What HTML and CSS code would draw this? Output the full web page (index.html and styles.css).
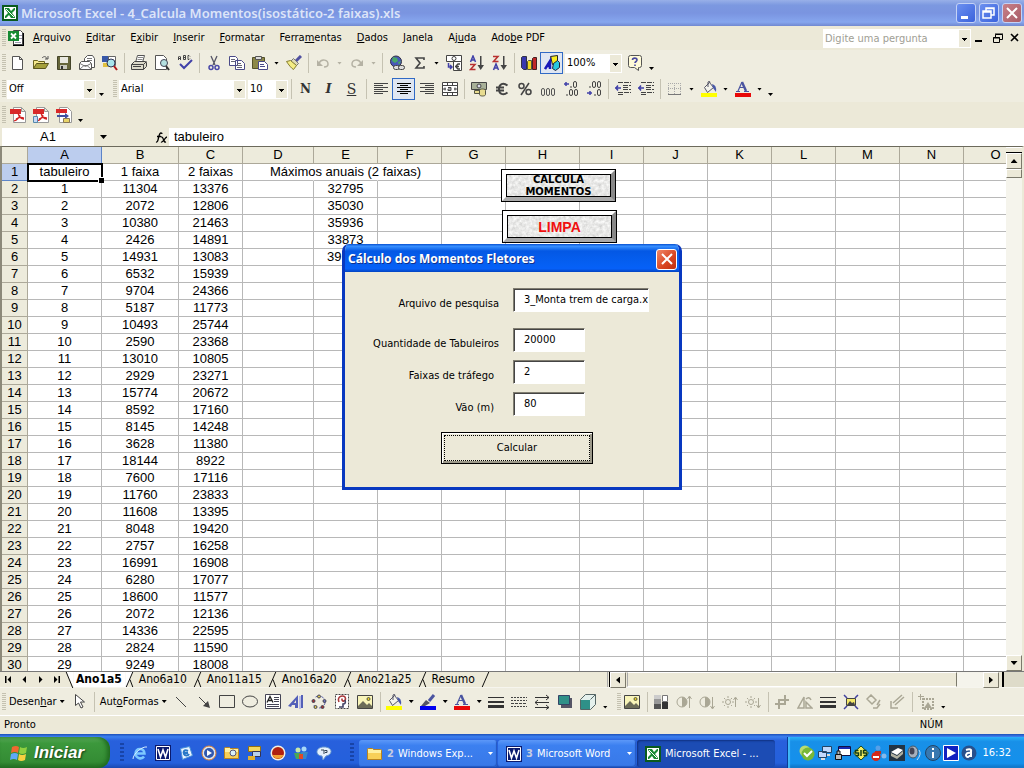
FILE: index.html
```html
<!DOCTYPE html>
<html lang="pt-BR">
<head>
<meta charset="utf-8">
<title>Microsoft Excel - 4_Calcula Momentos(isostático-2 faixas).xls</title>
<link rel="stylesheet" href="styles.css">
</head>
<body>
<svg class="sprite" aria-hidden="true">
<defs>
<symbol id="xl" viewBox="0 0 16 16"><path fill="#0a5a1e" d="M0 0h16v16H0z"/><path fill="#fff" d="M2 2h12v12H2z"/><path fill="#178a32" d="M3 3h4l2 3 3-3h1v2L10 8l3 4v1H9l-2-3-3 3H3v-2l3-3-3-4z"/><path stroke="#fff" d="M4 4l8 8" fill="none"/></symbol>
<symbol id="wd" viewBox="0 0 16 16"><path fill="#0a1a6e" d="M0 0h16v16H0z"/><path fill="none" stroke="#fff" d="M1.500 1.500h13v13h-13z"/><path fill="none" stroke="#fff" stroke-width="1.600" d="M3 4l2.500 8L8 5l2.500 7L13 4"/></symbol>
<symbol id="doc" viewBox="0 0 16 16"><path fill="#000" d="M7 3h9v13H5v-3z"/><path fill="#fff" stroke="#444" d="M5.500.5h7l2 2v12h-9z"/><path stroke="#99a" d="M11 5.500h3M11 8.500h3M7 12.500h6"/><path fill="#178a32" d="M0 1h11v10H0z"/><path stroke="#fff" stroke-width="1.800" d="M3 3.500l5 5M8 3.500l-5 5"/></symbol>
<symbol id="new" viewBox="0 0 16 16"><path fill="#fff" stroke="#555" d="M2.500 1.500h7l3 3v10h-10zM9.500 1.500v3h3"/></symbol>
<symbol id="open" viewBox="0 0 16 16"><path fill="#f5e88c" stroke="#6b6420" d="M.5 13.500v-8h4l1 1h6v3"/><path fill="#a5a03c" stroke="#5a551c" d="M.5 13.500l3-5h12l-3 5z"/><path fill="none" stroke="#555" d="M9 3c2-2 4-2 5 1M15 1v3h-3"/></symbol>
<symbol id="save" viewBox="0 0 16 16"><path fill="#66663a" stroke="#44442a" d="M1.500 1.500h13v13h-13z"/><path fill="#e8e8e0" d="M4 2h8v6H4z"/><path fill="#c9c9bd" d="M4 10h7v4H4z"/><path fill="#333" d="M5 11h2v3H5z"/></symbol>
<symbol id="mail" viewBox="0 0 16 16"><path fill="#fff" stroke="#555" d="M5.500 7V3.500l3-3h5l2 3v9h-4"/><path stroke="#777" d="M8 3.500h5M8 5.500h5"/><path fill="#fff" stroke="#555" d="M.5 8.500l2-2h8l2 2v6H.5z"/><path fill="none" stroke="#777" d="M1 14l4-3.500h3l4 3.500M1 8.500l5.500 3 5.500-3"/></symbol>
<symbol id="find" viewBox="0 0 16 16"><path fill="#3858a8" d="M0 1h7v6H0z"/><path fill="#e0c040" d="M1 8h5v4H1z"/><path fill="#fff" stroke="#666" d="M6.500 1.500h7v9h-7z"/><circle cx="9" cy="8" r="4" fill="#a8e4ec" stroke="#335"/><path stroke="#b01818" stroke-width="2" d="M12 11l3 4"/></symbol>
<symbol id="print" viewBox="0 0 16 16"><path fill="#fff" stroke="#555" d="M6.500.5h7l-2 7h-7z"/><path stroke="#888" d="M7 2.500h5M6.500 4.500h5"/><path fill="#dcdaca" stroke="#444" d="M.5 9.500l3-3h11l1 1v4l-3 3h-12z"/><path fill="none" stroke="#444" d="M.5 9.500h12l3-3M12.500 9.500v5M2 11.500h8"/></symbol>
<symbol id="prev" viewBox="0 0 16 16"><path fill="#fff" stroke="#555" d="M1.500.5h8l3 3v11h-11z"/><circle cx="10" cy="8" r="3.500" fill="#b4e0e0" stroke="#445"/><path stroke="#333" stroke-width="2" d="M12 11l3 4"/></symbol>
<symbol id="abc" viewBox="0 0 16 16"><path fill="none" stroke="#444" d="M1.500 5V2l1-1 1 1v3M1.500 3.500h2M6.500.5h2v4h-2zM6.500 2.500h2M13 1.500l-1-1h-1v4h1l1-1"/><path fill="none" stroke="#4040a8" stroke-width="2" d="M3 9l4 4 8-8"/></symbol>
<symbol id="cut" viewBox="0 0 16 16"><path stroke="#556" stroke-width="1.300" d="M5 1l4 9M11 1L7 10"/><g fill="none" stroke="#4848a8" stroke-width="1.500"><circle cx="5" cy="12.500" r="2"/><circle cx="11" cy="12.500" r="2"/></g></symbol>
<symbol id="copy" viewBox="0 0 16 16"><path fill="#fff" stroke="#4a4a88" d="M.5 1.500h6l2 2v7h-8zM6.500 5.500h6l3 3v6h-9z"/><path stroke="#667" d="M2 4.500h4M2 6.500h4M8 8.500h4M8 10.500h5M8 12.500h5"/></symbol>
<symbol id="paste" viewBox="0 0 16 16"><path fill="#8c8848" stroke="#54522c" d="M.5 2.500h12v11H.5z"/><path fill="#ddd" stroke="#555" d="M3.500 1.500h6v3h-6z"/><path fill="#fff" stroke="#4a4a88" d="M6.500 6.500h6l3 3v5h-9z"/><path stroke="#4a4a88" d="M8 9.500h4M8 11.500h5"/></symbol>
<symbol id="brush" viewBox="0 0 16 16"><path stroke="#5050a0" stroke-width="3" d="M15 1l-5 5"/><path fill="#dedab8" stroke="#777" d="M7.500 3.500l5 5-2 2-6-4z"/><path fill="#f4ec84" stroke="#857d30" d="M.5 6.500l4-1 6 5-3 4c-2-1-5-5-7-8z"/></symbol>
<symbol id="undo" viewBox="0 0 16 16"><path fill="none" stroke="#b5b2a4" stroke-width="1.500" d="M4 8c3-5 9-3 9 1 0 2-1 3-4 3"/><path fill="#b5b2a4" d="M2 5v6h6z"/></symbol>
<symbol id="redo" viewBox="0 0 16 16"><path fill="none" stroke="#b5b2a4" stroke-width="1.500" d="M12 8C9 3 3 5 3 9c0 2 1 3 4 3"/><path fill="#b5b2a4" d="M14 5v6H8z"/></symbol>
<symbol id="link" viewBox="0 0 16 16"><circle cx="7" cy="6.500" r="5.500" fill="#4858b8" stroke="#334"/><path fill="#48a868" d="M4 2l4 1 1 3-3 2-3-2zM9 7l3-1-2 4z"/><g fill="#ddd" stroke="#444"><rect x="4.500" y="10.500" width="6" height="4" rx="2"/><rect x="9.500" y="10.500" width="6" height="4" rx="2"/></g></symbol>
<symbol id="sum" viewBox="0 0 16 16"><path fill="none" stroke="#444" stroke-width="1.600" d="M12 5V3H4l4 5-4 5h8v-2"/></symbol>
<symbol id="conv" viewBox="0 0 16 16"><path fill="#fff" stroke="#444" d="M.5.5h15v6H.5zM7.500 6.500h8v9h-8z"/><circle cx="8" cy="3.500" r="2" fill="none" stroke="#444"/><path fill="none" stroke="#444" stroke-width="1.500" d="M14 9h-2l-1.500 1.500v2L12 14h2M9 11.500h4"/><path fill="none" stroke="#4040a8" stroke-width="1.500" d="M2.500 8v4H6M4 10l2 2-2 2"/></symbol>
<symbol id="az" viewBox="0 0 16 16"><path fill="none" stroke="#4040a8" stroke-width="1.500" d="M1.500 7l2.500-6 2.500 6M2.500 5h3"/><path fill="none" stroke="#b83030" stroke-width="1.500" d="M1 9.500h5L1.500 14.500h5"/><path fill="#444" d="M11 1h1.500v9H15l-3.300 5L8.500 10H11z"/></symbol>
<symbol id="za" viewBox="0 0 16 16"><path fill="none" stroke="#4040a8" stroke-width="1.500" d="M1.500 15L4 9l2.500 6M2.500 13h3"/><path fill="none" stroke="#b83030" stroke-width="1.500" d="M1 1.500h5L1.500 6.500h5"/><path fill="#444" d="M11 1h1.500v9H15l-3.300 5L8.500 10H11z"/></symbol>
<symbol id="chart" viewBox="0 0 16 16"><path fill="#3838b0" stroke="#334" d="M.5 2.500l1-1h4v13h-3l-2-2z"/><path fill="#f0d820" stroke="#554" d="M6.500 6.500l1-1h3v9h-4z"/><path fill="#c02828" stroke="#422" d="M11.500 3.500l1-1h3v12h-4z"/></symbol>
<symbol id="draw" viewBox="0 0 16 16"><path fill="#f8ec20" stroke="#222" d="M6.500 1.500l7-1v7l-5 2z"/><path fill="#28c8e0" stroke="#223" d="M9.500 8.500l4-3 2 2v5l-4 3-3-2z"/><path fill="none" stroke="#1818b8" stroke-width="2.500" d="M1 14L6 6v8M3 11h3"/></symbol>
<symbol id="help" viewBox="0 0 16 16"><path fill="#fffbd8" stroke="#555" d="M3.500.5h9q2 0 2 2v8q0 2-2 2h-1v3l-4-3h-4q-2 0-2-2v-8q0-2 2-2z"/><path fill="none" stroke="#4848a0" stroke-width="1.600" d="M5.500 5C5.500 2.500 10 2.500 10 5 10 6.500 8 6.500 8 8M8 9.500v1.500"/></symbol>
<symbol id="al" viewBox="0 0 16 16"><path stroke="#444" d="M1 2.500h14M1 4.500h9M1 6.500h14M1 8.500h9M1 10.500h14M1 12.500h9"/></symbol>
<symbol id="ac" viewBox="0 0 16 16"><path stroke="#000" d="M1 2.500h14M4 4.500h8M1 6.500h14M4 8.500h8M1 10.500h14M4 12.500h8"/></symbol>
<symbol id="ar" viewBox="0 0 16 16"><path stroke="#444" d="M1 2.500h14M6 4.500h9M1 6.500h14M6 8.500h9M1 10.500h14M6 12.500h9"/></symbol>
<symbol id="merge" viewBox="0 0 16 16"><path fill="#fff" stroke="#444" d="M.5 1.500h15v13H.5zM.5 4.500h15M.5 11.500h15M5.500 1.500v3M10.500 1.500v3M5.500 11.500v3M10.500 11.500v3"/><path fill="none" stroke="#444" d="M1 8h3M12 8h3M3 6.500v3M13 6.500v3M6 6.500h3v3H6v-1.500h3"/></symbol>
<symbol id="money" viewBox="0 0 16 16"><path fill="#a8b098" stroke="#444" d="M.5 1.500h15v7H.5z"/><circle cx="8" cy="5" r="2" fill="#dde" stroke="#444"/><path fill="#e8dc90" stroke="#554" d="M8.500 9.500c0-2 6-2 6 0v4c0 2-6 2-6 0zM3.500 9.500h5v3h-5z"/></symbol>
<symbol id="euro" viewBox="0 0 16 16"><path fill="none" stroke="#444" stroke-width="2" d="M13.500 4.500C9 1 5 3 5 8s4 7 8.500 3.500M2 6.500h8M2 9.500h8"/></symbol>
<symbol id="pct" viewBox="0 0 16 16"><g fill="none" stroke="#444" stroke-width="1.500"><circle cx="4.500" cy="5" r="2.500"/><circle cx="11.500" cy="11" r="2.500"/><path d="M12 2L4 14"/></g></symbol>
<symbol id="mil" viewBox="0 0 16 16"><g fill="none" stroke="#555"><rect x="1.500" y="7.500" width="3" height="7" rx="1.500"/><rect x="6.500" y="7.500" width="3" height="7" rx="1.500"/><rect x="11.500" y="7.500" width="3" height="7" rx="1.500"/></g></symbol>
<symbol id="inc" viewBox="0 0 16 16"><path stroke="#4040a8" stroke-width="1.500" d="M1 3h5M3 1v4"/><g fill="none" stroke="#444"><rect x="10.500" y=".5" width="3" height="6" rx="1.500"/><rect x="6.500" y="8.500" width="3" height="6" rx="1.500"/><rect x="11.500" y="8.500" width="3" height="6" rx="1.500"/><path d="M8 5v2M4 13v2"/></g></symbol>
<symbol id="dec" viewBox="0 0 16 16"><path stroke="#4040a8" stroke-width="1.500" d="M1 12h5M4 10v4"/><g fill="none" stroke="#444"><rect x="6.500" y=".5" width="3" height="6" rx="1.500"/><rect x="11.500" y=".5" width="3" height="6" rx="1.500"/><rect x="11.500" y="8.500" width="3" height="6" rx="1.500"/><path d="M4 5v2M9 13v2"/></g></symbol>
<symbol id="ind" viewBox="0 0 16 16"><path stroke="#444" d="M3 1.500h13M8 4.500h8M8 6.500h5M8 8.500h8M3 11.500h13M3 13.500h6" stroke-dasharray="5 1"/><path fill="none" stroke="#4040a8" stroke-width="1.500" d="M0 7h6M3 4.500L1 7l2 2.500"/></symbol>
<symbol id="bord" viewBox="0 0 16 16"><path fill="none" stroke="#aaa" stroke-dasharray="1 1" d="M1.500 2v12M7.500 2v12M13.500 2v12M1 2.500h13M1 7.500h13"/><path stroke="#777" d="M1 13.500h13"/></symbol>
<symbol id="bkt" viewBox="0 0 16 12"><path fill="#f4f4ec" stroke="#556" d="M3.500 6.500l5-5 4 5-6 5z"/><path fill="none" stroke="#556" d="M7 6V1q2-2 2 1"/><path fill="#4858a8" d="M11 3q5 1 4 8l-3-4z"/></symbol>
<symbol id="fill" viewBox="0 0 16 16"><use href="#bkt" height="12"/><path fill="#ff0" d="M0 12h16v4H0z"/></symbol>
<symbol id="fcol" viewBox="0 0 16 16"><path fill="none" stroke="#4a54a0" stroke-width="1.200" d="M3 10L7 1"/><path fill="none" stroke="#4a54a0" stroke-width="2.400" d="M7 1l4 9"/><path stroke="#4a54a0" d="M5 6.500h5M1 10.500h4M9 10.500h5"/><path fill="#e80808" d="M0 12h16v4H0z"/></symbol>
<symbol id="lcol" viewBox="0 0 16 16"><path stroke="#4a54a0" stroke-width="3" d="M14 1L9 7"/><path fill="#556" d="M6 6l4 3-5 3H1z"/><path fill="#0000f0" d="M0 12h16v4H0z"/></symbol>
<symbol id="pdf" viewBox="0 0 16 16"><path fill="#fff" stroke="#999" d="M3.500.5h8l4 4v11h-12zM11.500.5v4h4"/><path fill="#d82828" d="M0 2h11v5H0z"/><path fill="none" stroke="#d02020" stroke-width="1.300" d="M8 6c1 4 3 6 6 6M10 8c-1 3-3 5-6 6M6 12c3-2 5-2 8-1"/></symbol>
<symbol id="pdf2" viewBox="0 0 16 16"><use href="#pdf"/><path fill="#c8d8f8" stroke="#58a" d="M.5 9.500h4v6h-4z"/></symbol>
<symbol id="pdf3" viewBox="0 0 16 16"><path fill="#fff" stroke="#999" d="M3.500.5h8l4 4v11h-12z"/><path fill="#d82828" d="M0 2h11v4H0z"/><path fill="#4050a0" d="M1 8h8V6l4 3-4 3v-2H1z"/><path fill="#e8d468" stroke="#875" d="M7.500 11.500h6v4h-6z"/></symbol>
<symbol id="cur" viewBox="0 0 16 16"><path fill="#fff" stroke="#444" d="M4.500.5v11l3-2.500 2.500 5 2-1-2.500-5h4z"/></symbol>
<symbol id="line" viewBox="0 0 16 16"><path stroke="#444" d="M3 3l10 10"/></symbol>
<symbol id="arw" viewBox="0 0 16 16"><path stroke="#444" d="M3 3l9 9"/><path fill="#444" d="M14 14l-7-2 5-5z"/></symbol>
<symbol id="rect" viewBox="0 0 16 16"><path fill="none" stroke="#444" d="M.5 1.500h15v12H.5z"/></symbol>
<symbol id="oval" viewBox="0 0 16 16"><ellipse cx="8" cy="7.500" rx="7.500" ry="5.500" fill="none" stroke="#444"/></symbol>
<symbol id="tbox" viewBox="0 0 16 16"><path fill="#fff" stroke="#445" d="M.5.5h15v14H.5z"/><path stroke="#445" d="M9 3.500h5M9 5.500h5M9 7.500h5M2 10.500h12M2 12.500h12"/><path fill="none" stroke="#222" stroke-width="1.300" d="M2 8.500l3-6 3 6M3.500 6.500h3"/></symbol>
<symbol id="wart" viewBox="0 0 16 16"><path fill="#5460b8" d="M0 12L10 1v13H7v-3H4l-1 2z"/><path fill="#b8bce8" d="M11 2h2v13h-2z"/><path fill="#5460b8" d="M13 1h2v13h-2z"/><path fill="#ece9d8" d="M6 9l2-3v3z"/></symbol>
<symbol id="diag" viewBox="0 0 16 16"><circle cx="8" cy="8" r="6" fill="none" stroke="#5058a8" stroke-dasharray="3 3"/><g stroke="#445"><circle cx="8" cy="2.500" r="1.500" fill="#dcc850"/><circle cx="2.500" cy="7" r="1.500" fill="#a43030"/><circle cx="13.500" cy="7" r="1.500" fill="#6870b8"/><circle cx="4.500" cy="13" r="1.500" fill="#dcc850"/><circle cx="11.500" cy="13" r="1.500" fill="#a43030"/></g></symbol>
<symbol id="clip" viewBox="0 0 16 16"><path fill="#fff" stroke="#444" d="M1.500.5h13v14h-13z" stroke-dasharray="2 1"/><path fill="none" stroke="#a83838" stroke-width="1.600" d="M5 8C2 2 11 0 11.500 4.500c0 3-4 4-3.500 0"/><path fill="none" stroke="#446" stroke-width="1.600" d="M11 6c1 3 0 4-2 4v3H5"/></symbol>
<symbol id="pic" viewBox="0 0 16 16"><path fill="#f8f4b8" stroke="#444" d="M.5 1.500h15v13H.5z"/><path fill="#6c6c58" d="M1 14v-2l5-5 4 4 2-2 3 3v2z"/><circle cx="11.500" cy="5" r="1.500" fill="#e8d020" stroke="#554"/></symbol>
<symbol id="lw" viewBox="0 0 16 16"><path fill="#333" d="M0 3h16v1H0zM0 7h16v2H0zM0 11h16v3H0z"/></symbol>
<symbol id="dash" viewBox="0 0 16 16"><path stroke="#444" stroke-dasharray="2 1" d="M0 3.500h16M0 6.500h16M0 12.500h16"/><path stroke="#444" stroke-dasharray="3 1" d="M0 9.500h16"/></symbol>
<symbol id="arws" viewBox="0 0 16 16"><path fill="none" stroke="#333" d="M1 3.500h14M12 1l3 2.500L12 6M1 8.500h14M4 6L1 8.500 4 11M1 13.500h14M12 11l3 2.500-3 2"/></symbol>
<symbol id="shad" viewBox="0 0 16 16"><path fill="#556" d="M4 4h11v10H4z"/><path fill="#2f9088" stroke="#346" d="M1.500 1.500h11v9h-11z"/></symbol>
<symbol id="cube" viewBox="0 0 16 16"><path fill="#e4f0ec" stroke="#566" d="M.5 5.500l5-5h10v10l-5 5H.5z"/><path fill="#2f9088" d="M1 6h9v9H1z"/><path stroke="#566" d="M10.500 5.500l5-5"/></symbol>
<symbol id="grad" viewBox="0 0 16 16"><path fill="#ccc" d="M1 1h7v4H1z"/><path fill="#999" d="M1 5h7v5H1z"/><path fill="#555" d="M1 10h7v5H1z"/><path fill="#fff" stroke="#777" d="M9.500 1.500h5v6h-5z"/><path fill="#333" d="M9 8h6v7H9z"/></symbol>
<symbol id="con" viewBox="0 0 16 16"><circle cx="6" cy="8" r="5" fill="none" stroke="#aaa795"/><path fill="#aaa795" d="M6 3a5 5 0 010 10z"/><path fill="none" stroke="#aaa795" d="M13.500 14V3M11.500 5l2-3 2 3"/></symbol>
<symbol id="cod" viewBox="0 0 16 16"><circle cx="6" cy="8" r="5" fill="none" stroke="#aaa795"/><path fill="#aaa795" d="M6 3a5 5 0 010 10z"/><path fill="none" stroke="#aaa795" d="M13.500 3v11M11.500 12l2 3 2-3"/></symbol>
<symbol id="sun" viewBox="0 0 16 16"><circle cx="6" cy="8" r="2.500" fill="none" stroke="#aaa795"/><path stroke="#aaa795" stroke-dasharray="2 8" d="M6 2v12M0 8h12M2 4l8 8M10 4l-8 8"/><path fill="none" stroke="#aaa795" d="M13.500 13V4M11.500 6l2-3 2 3"/></symbol>
<symbol id="sud" viewBox="0 0 16 16"><circle cx="6" cy="8" r="2.500" fill="none" stroke="#aaa795"/><path stroke="#aaa795" stroke-dasharray="2 8" d="M6 2v12M0 8h12M2 4l8 8M10 4l-8 8"/><path fill="none" stroke="#aaa795" d="M13.500 4v9M11.500 11l2 3 2-3"/></symbol>
<symbol id="crop" viewBox="0 0 16 16"><path fill="none" stroke="#aaa795" stroke-width="2" d="M5 15V6h10M1 10h10V1"/></symbol>
<symbol id="rot" viewBox="0 0 16 16"><path fill="none" stroke="#aaa795" stroke-width="1.500" d="M7 3v11H1zM9 14V8l6 6zM9 5q3-3 5 1"/></symbol>
<symbol id="comp" viewBox="0 0 16 16"><path fill="#f4e868" stroke="#444" d="M3.500 4.500h9v7h-9z"/><path stroke="#4040a0" stroke-width="1.500" d="M1 1l3 3M15 1l-3 3M1 15l3-3M15 15l-3-3"/><path fill="#444" d="M4 11l3-4 2 2 2-1 1 3z"/></symbol>
<symbol id="gbk" viewBox="0 0 16 16"><path fill="none" stroke="#aaa795" stroke-width="1.500" d="M1 5l4-4 5 5-4 4zM14 6l-3 5M14 10l-3 4H7"/></symbol>
<symbol id="gar" viewBox="0 0 16 16"><path fill="none" stroke="#aaa795" stroke-width="1.500" d="M15 3L6 11M13 1L4 9M2 7v7h7"/></symbol>
<symbol id="gst" viewBox="0 0 16 16"><path fill="none" stroke="#aaa795" stroke-dasharray="2 1" stroke-width="2" d="M5 5h10v10H5z"/><path fill="#aaa795" d="M6 14l4-6 4 6zM0 2h6v1H0zM2 0h1v6H2z"/></symbol>
<symbol id="ie" viewBox="0 0 16 16"><path fill="none" stroke="#7cc8ff" stroke-width="2.500" d="M3 8.500h9.500C12 2.500 4 2.500 3.500 8.500 4 14 10 14.500 12 11.500"/><path fill="none" stroke="#d4ecff" d="M1 14C1 9 10 1 15 2"/></symbol>
<symbol id="oe" viewBox="0 0 16 16"><path fill="#e8f4ff" stroke="#4890d8" d="M2.500 3.500l9-2 3 9-10 4z"/><path fill="none" stroke="#2878c8" stroke-width="2" d="M10 6C6 4 5 7 6 9s4 2 5 0M6 8h4"/></symbol>
<symbol id="wmp" viewBox="0 0 16 16"><circle cx="8" cy="8" r="7" fill="#dce8f4" stroke="#e08030"/><circle cx="8" cy="8" r="5" fill="#3058b0"/><path fill="#fff" d="M6 5l5 3-5 3z"/></symbol>
<symbol id="fold" viewBox="0 0 16 16"><path fill="#fff0a0" stroke="#b88420" d="M.5 3.500q0-1 1-1h4l1 1h7q1 0 1 1v9h-14z"/><path fill="#f8d058" d="M1 7h13v6H1z"/></symbol>
<symbol id="fsr" viewBox="0 0 16 16"><use href="#fold"/><circle cx="9" cy="8" r="3" fill="#d8f0f8" stroke="#557"/></symbol>
<symbol id="net" viewBox="0 0 16 16"><path fill="#f4d860" stroke="#967010" d="M1.500 1.500h12v5h-12z"/><path fill="#b8d0ec" stroke="#335" d="M5.500 6.500h8v5h-8z"/><path fill="#e0b030" d="M1 11h7v4H1z"/></symbol>
<symbol id="red" viewBox="0 0 16 16"><circle cx="8" cy="8" r="7.500" fill="#f4f0e0"/><circle cx="8" cy="8" r="6" fill="#b02010"/><path fill="#f4a030" d="M2.500 10h11a6 6 0 01-11 0z"/></symbol>
<symbol id="ppl" viewBox="0 0 16 16"><circle cx="5" cy="5" r="2.500" fill="#c8e8a8"/><circle cx="11" cy="4" r="2.500" fill="#a8d8f8"/><path fill="#48a858" d="M1 8h7l-1 6H3z"/><path fill="#3888c8" d="M8 7h7l-2 7H9z"/><path fill="#e04828" d="M6 9h4v5H6z"/></symbol>
<symbol id="chat" viewBox="0 0 16 16"><path fill="#e4f0fc" stroke="#6898d0" d="M8 2C-1 2-1 11 6 11l1 4 3-4c7-1 7-9-2-9z"/><path fill="none" stroke="#345" d="M5 5h3v4M8.500 5.500H11v2H9"/></symbol>
<symbol id="skype" viewBox="0 0 16 16"><circle cx="6" cy="6" r="5.500" fill="#b8dc70"/><circle cx="9" cy="9" r="6.500" fill="#78b838"/><path fill="none" stroke="#fff" stroke-width="2" d="M5 8l3 3 5-5"/></symbol>
<symbol id="mons" viewBox="0 0 16 16"><path fill="#c0d8fc" stroke="#246" d="M5.500 1.500h9v6h-9zM1.500 6.500h8v6h-8z"/><path fill="#ddd" d="M10 9h3v2h-3zM4 13h4v2H4z"/></symbol>
<symbol id="lock" viewBox="0 0 16 16"><path fill="#fff" stroke="#114" d="M3.500 1.500h12v9h-12z"/><path fill="#1828b0" d="M4 2h11v2H4z"/><path fill="#bbb" stroke="#111" d="M.5 9.500h6v5h-6zM2 9V6h3v3"/></symbol>
<symbol id="sis" viewBox="0 0 16 16"><path fill="#f8f060" stroke="#1a4a20" d="M8 1l7.500 7L8 15 .5 8z"/><path fill="none" stroke="#123c18" stroke-width="1.500" d="M5.500 5.500h-3v2.500h3v2.500h-3M8 5v6M13.500 5.500h-3v2.500h3v2.500h-3"/></symbol>
<symbol id="stop" viewBox="0 0 16 16"><circle cx="7" cy="3" r="2.500" fill="#58a0e8"/><path fill="#c03020" d="M4 6h6v3H4z"/><circle cx="5" cy="11.500" r="4.500" fill="#d82818"/><path fill="#fff" d="M2 11h6v2H2z"/><circle cx="13" cy="11" r="2.500" fill="#88b8e8"/></symbol>
<symbol id="scan" viewBox="0 0 16 16"><path fill="#234" d="M0 0h16v16H0z"/><path fill="#fff" d="M2 7l7-4 5 2-6 5z"/><path fill="#b0b0a0" d="M2 8l6 3 6-5v3l-6 5-6-3z"/></symbol>
<symbol id="spk" viewBox="0 0 16 16"><ellipse cx="6" cy="7" rx="5" ry="6" fill="#a8b0bc" stroke="#456"/><ellipse cx="5" cy="6" rx="2.500" ry="3.500" fill="#445"/><path fill="none" stroke="#c8dcf4" d="M12 5q3 4-2 10"/></symbol>
<symbol id="inf" viewBox="0 0 16 16"><circle cx="8" cy="8" r="7.500" fill="#3878b0" stroke="#246"/><path fill="none" stroke="#fff" stroke-width="2" d="M8 3v2M8 7v6"/></symbol>
<symbol id="play" viewBox="0 0 16 16"><path fill="#1020c0" stroke="#fff" d="M.5.5h15v15H.5z"/><path fill="#fff" d="M4 3l9 5-9 5z"/></symbol>
<symbol id="ava" viewBox="0 0 16 16"><circle cx="8" cy="8" r="7.500" fill="#28508c"/><path fill="none" stroke="#fff" stroke-width="2" d="M5 5q6-2 5 2v5M10 8c-6-1-6 4-3 4l3-2"/></symbol>
<symbol id="flag" viewBox="0 0 18 18"><path fill="#f06830" d="M2 3q4-2 7 0L8 9Q5 7 1 9z"/><path fill="#90d040" d="M10 3q3 2 7 0l-1 6q-4 2-7 0z"/><path fill="#60a8f8" d="M1 10q4-2 7 0l-1 6q-3-2-7 0z"/><path fill="#f8d040" d="M9 10q3 2 7 0l-1 6q-4 2-7 0z"/></symbol>
<symbol id="fx" viewBox="0 0 14 14"><path fill="none" stroke="#000" stroke-width="1.300" d="M2 12c3 1 2-9 5-9 1 0 1 0 1 1M3 6.500h4M7 7c3-1 2 6 5 5M13 7c-2 0-4 6-6 5"/></symbol>
</defs>
</svg>

<header class="titlebar">
  <svg><use href="#xl"/></svg>
  <h1>Microsoft Excel - 4_Calcula Momentos(isostático-2 faixas).xls</h1>
  <button class="cap" aria-label="Minimizar"><svg viewBox="0 0 16 16"><path fill="#fff" d="M3 11h7v3H3z"/></svg></button>
  <button class="cap" aria-label="Restaurar"><svg viewBox="0 0 16 16"><path fill="none" stroke="#fff" stroke-width="1.500" d="M5 6V3h8v7h-3M2 6h8v7H2zM5 3.500h8M2 7h8"/></svg></button>
  <button class="cap close" aria-label="Fechar"><svg viewBox="0 0 16 16"><path stroke="#fff" stroke-width="2" d="M3 3l10 10M13 3L3 13"/></svg></button>
</header>

<nav class="menubar">
  <i class="grip"></i>
  <svg class="docicon"><use href="#doc"/></svg>
  <button><u>A</u>rquivo</button><button><u>E</u>ditar</button><button>E<u>x</u>ibir</button><button><u>I</u>nserir</button><button><u>F</u>ormatar</button><button>Ferra<u>m</u>entas</button><button><u>D</u>ados</button><button><u>J</u>anela</button><button>Aj<u>u</u>da</button><button>Ado<u>b</u>e PDF</button>
  <span class="combo ask"><input aria-label="Pergunta" placeholder="Digite uma pergunta"></span>
  <button class="mdi" aria-label="Minimizar pasta"><svg viewBox="0 0 16 16"><path d="M2 10h7v2H2z"/></svg></button>
  <button class="mdi" aria-label="Restaurar pasta"><svg viewBox="0 0 16 16"><path fill="none" stroke="#000" d="M5.500 7V4.500h7v5H10M3.500 7.500h6v5h-6zM5 4h8M3 8h7"/></svg></button>
  <button class="mdi" aria-label="Fechar pasta"><svg viewBox="0 0 16 16"><path stroke="#000" stroke-width="1.600" d="M4 4l7 7M11 4l-7 7"/></svg></button>
</nav>

<div class="toolbar">
  <i class="grip"></i>
  <button class="tb" aria-label="Novo"><svg><use href="#new"/></svg></button><button class="tb" aria-label="Abrir"><svg><use href="#open"/></svg></button><button class="tb" aria-label="Salvar"><svg><use href="#save"/></svg></button><button class="tb" aria-label="Email"><svg><use href="#mail"/></svg></button><button class="tb" aria-label="Pesquisar"><svg><use href="#find"/></svg></button>
  <i class="sep"></i>
  <button class="tb" aria-label="Imprimir"><svg><use href="#print"/></svg></button><button class="tb" aria-label="Visualizar"><svg><use href="#prev"/></svg></button><button class="tb" aria-label="Ortografia"><svg><use href="#abc"/></svg></button>
  <i class="sep"></i>
  <button class="tb" aria-label="Recortar"><svg><use href="#cut"/></svg></button><button class="tb" aria-label="Copiar"><svg><use href="#copy"/></svg></button><button class="tb" aria-label="Colar"><svg><use href="#paste"/></svg></button><button class="dd" aria-label="Opções de colar"></button><button class="tb" aria-label="Pincel"><svg><use href="#brush"/></svg></button>
  <i class="sep"></i>
  <button class="tb" aria-label="Desfazer"><svg><use href="#undo"/></svg></button><button class="dd off" aria-label="Lista desfazer"></button><button class="tb" aria-label="Refazer"><svg><use href="#redo"/></svg></button><button class="dd off" aria-label="Lista refazer"></button>
  <i class="sep"></i>
  <button class="tb" aria-label="Hiperlink"><svg><use href="#link"/></svg></button><button class="tb" aria-label="AutoSoma"><svg><use href="#sum"/></svg></button><button class="dd" aria-label="Funções"></button><button class="tb" aria-label="Conversão"><svg><use href="#conv"/></svg></button><button class="tb" aria-label="Crescente"><svg><use href="#az"/></svg></button><button class="tb" aria-label="Decrescente"><svg><use href="#za"/></svg></button>
  <i class="sep"></i>
  <button class="tb" aria-label="Gráfico"><svg><use href="#chart"/></svg></button><button class="tb on" aria-label="Desenho"><svg><use href="#draw"/></svg></button>
  <span class="combo zoom"><select aria-label="Zoom"><option>100%</option></select></span>
  <button class="tb" aria-label="Ajuda"><svg><use href="#help"/></svg></button><button class="dd low" aria-label="Mais botões"></button>
</div>

<div class="toolbar">
  <i class="grip"></i>
  <span class="combo style"><select aria-label="Modo"><option>Off</option></select></span><button class="dd low" aria-label="Mais opções"></button>
  <i class="grip mid"></i>
  <span class="combo font"><select aria-label="Fonte"><option>Arial</option></select></span>
  <span class="combo size"><select aria-label="Tamanho"><option>10</option></select></span>
  <i class="sep"></i>
  <button class="tb txt"><b>N</b></button><button class="tb txt"><em>I</em></button><button class="tb txt"><u>S</u></button>
  <i class="sep"></i>
  <button class="tb" aria-label="Esquerda"><svg><use href="#al"/></svg></button><button class="tb on" aria-label="Centralizar"><svg><use href="#ac"/></svg></button><button class="tb" aria-label="Direita"><svg><use href="#ar"/></svg></button><button class="tb" aria-label="Mesclar"><svg><use href="#merge"/></svg></button>
  <i class="sep"></i>
  <button class="tb" aria-label="Moeda"><svg><use href="#money"/></svg></button><button class="tb" aria-label="Euro"><svg><use href="#euro"/></svg></button><button class="tb" aria-label="Porcentagem"><svg><use href="#pct"/></svg></button><button class="tb" aria-label="Milhares"><svg><use href="#mil"/></svg></button><button class="tb" aria-label="Aumentar casas"><svg><use href="#inc"/></svg></button><button class="tb" aria-label="Diminuir casas"><svg><use href="#dec"/></svg></button>
  <i class="sep"></i>
  <button class="tb" aria-label="Diminuir recuo"><svg><use href="#ind"/></svg></button><button class="tb" aria-label="Aumentar recuo"><svg><use href="#ind"/></svg></button>
  <i class="sep"></i>
  <button class="tb" aria-label="Bordas"><svg><use href="#bord"/></svg></button><button class="dd" aria-label="Lista bordas"></button><button class="tb" aria-label="Preenchimento"><svg><use href="#fill"/></svg></button><button class="dd" aria-label="Cores de preenchimento"></button><button class="tb" aria-label="Cor da fonte"><svg><use href="#fcol"/></svg></button><button class="dd" aria-label="Cores da fonte"></button><button class="dd low" aria-label="Mais formatação"></button>
</div>

<div class="toolbar short">
  <i class="grip"></i>
  <button class="tb" aria-label="Converter em PDF"><svg><use href="#pdf"/></svg></button><button class="tb" aria-label="PDF e email"><svg><use href="#pdf2"/></svg></button><button class="tb" aria-label="PDF e revisão"><svg><use href="#pdf3"/></svg></button><button class="dd low" aria-label="Mais PDF"></button>
</div>

<div class="formula">
  <input class="name" aria-label="Caixa de nome" value="A1"><button class="dd" aria-label="Nomes"></button>
  <svg class="fx"><use href="#fx"/></svg>
  <input class="fbar" aria-label="Barra de fórmulas" value="tabuleiro">
</div>

<main class="work">
  <div class="sheet">
  <table class="grid">
  <colgroup><col class="h"><col class="a"><col class="b"><col><col class="d"><col><col><col><col class="a"><col><col><col><col><col><col><col></colgroup>
  <thead><tr><th><th class="sel">A<th>B<th>C<th>D<th>E<th>F<th>G<th>H<th>I<th>J<th>K<th>L<th>M<th>N<th>O</thead>
  <tbody>
  <tr><th class="sel">1<td class="active">tabuleiro<td>1 faixa<td>2 faixas<td class="open"><td class="open"><span class="spill">Máximos anuais (2 faixas)</span><td><td><td><td><td><td><td><td><td><td>
  <tr><th>2<td>1<td>11304<td>13376<td><td>32795<td><td><td><td><td><td><td><td><td><td>
  <tr><th>3<td>2<td>2072<td>12806<td><td>35030<td><td><td><td><td><td><td><td><td><td>
  <tr><th>4<td>3<td>10380<td>21463<td><td>35936<td><td><td><td><td><td><td><td><td><td>
  <tr><th>5<td>4<td>2426<td>14891<td><td>33873<td><td><td><td><td><td><td><td><td><td>
  <tr><th>6<td>5<td>14931<td>13083<td><td class="part">39<td><td><td><td><td><td><td><td><td><td>
  <tr><th>7<td>6<td>6532<td>15939<td><td><td><td><td><td><td><td><td><td><td><td>
  <tr><th>8<td>7<td>9704<td>24366<td><td><td><td><td><td><td><td><td><td><td><td>
  <tr><th>9<td>8<td>5187<td>11773<td><td><td><td><td><td><td><td><td><td><td><td>
  <tr><th>10<td>9<td>10493<td>25744<td><td><td><td><td><td><td><td><td><td><td><td>
  <tr><th>11<td>10<td>2590<td>23368<td><td><td><td><td><td><td><td><td><td><td><td>
  <tr><th>12<td>11<td>13010<td>10805<td><td><td><td><td><td><td><td><td><td><td><td>
  <tr><th>13<td>12<td>2929<td>23271<td><td><td><td><td><td><td><td><td><td><td><td>
  <tr><th>14<td>13<td>15774<td>20672<td><td><td><td><td><td><td><td><td><td><td><td>
  <tr><th>15<td>14<td>8592<td>17160<td><td><td><td><td><td><td><td><td><td><td><td>
  <tr><th>16<td>15<td>8145<td>14248<td><td><td><td><td><td><td><td><td><td><td><td>
  <tr><th>17<td>16<td>3628<td>11380<td><td><td><td><td><td><td><td><td><td><td><td>
  <tr><th>18<td>17<td>18144<td>8922<td><td><td><td><td><td><td><td><td><td><td><td>
  <tr><th>19<td>18<td>7600<td>17116<td><td><td><td><td><td><td><td><td><td><td><td>
  <tr><th>20<td>19<td>11760<td>23833<td><td><td><td><td><td><td><td><td><td><td><td>
  <tr><th>21<td>20<td>11608<td>13395<td><td><td><td><td><td><td><td><td><td><td><td>
  <tr><th>22<td>21<td>8048<td>19420<td><td><td><td><td><td><td><td><td><td><td><td>
  <tr><th>23<td>22<td>2757<td>16258<td><td><td><td><td><td><td><td><td><td><td><td>
  <tr><th>24<td>23<td>16991<td>16908<td><td><td><td><td><td><td><td><td><td><td><td>
  <tr><th>25<td>24<td>6280<td>17077<td><td><td><td><td><td><td><td><td><td><td><td>
  <tr><th>26<td>25<td>18600<td>11577<td><td><td><td><td><td><td><td><td><td><td><td>
  <tr><th>27<td>26<td>2072<td>12136<td><td><td><td><td><td><td><td><td><td><td><td>
  <tr><th>28<td>27<td>14336<td>22595<td><td><td><td><td><td><td><td><td><td><td><td>
  <tr><th>29<td>28<td>2824<td>11590<td><td><td><td><td><td><td><td><td><td><td><td>
  <tr><th>30<td>29<td>9249<td>18008<td><td><td><td><td><td><td><td><td><td><td><td>
  </tbody>
  </table>
  <button class="macro calc"><svg class="stone" aria-hidden="true"><filter id="st"><feTurbulence type="fractalNoise" baseFrequency=".3" numOctaves="3"/><feColorMatrix values=".5 0 0 0 .56 .5 0 0 0 .56 .5 0 0 0 .55 0 0 0 0 1"/></filter><rect width="100%" height="100%" filter="url(#st)"/></svg><span>CALCULA MOMENTOS</span></button>
  <button class="macro clear"><svg class="stone" aria-hidden="true"><rect width="100%" height="100%" filter="url(#st)"/></svg><span>LIMPA</span></button>
  </div>
  <div class="vscroll"><i class="split"></i><button class="sb up" aria-label="Rolar para cima"></button><i class="thumb"></i><i class="track"></i><button class="sb down" aria-label="Rolar para baixo"></button></div>
</main>

<div class="tabs">
  <div class="tabnav"><button aria-label="Primeira"><svg viewBox="0 0 9 9"><path d="M1 1h1.500v7H1zM7 1v7L3.500 4.500z"/></svg></button><button aria-label="Anterior"><svg viewBox="0 0 9 9"><path d="M6 1v7L2.500 4.500z"/></svg></button><button aria-label="Próxima"><svg viewBox="0 0 9 9"><path d="M3 1v7l3.500-3.500z"/></svg></button><button aria-label="Última"><svg viewBox="0 0 9 9"><path d="M6.500 1H8v7H6.500zM2 1v7l3.500-3.500z"/></svg></button></div>
  <svg class="slash" viewBox="0 0 9 17"><path fill="#fff" d="M1 0h8v17z"/><path stroke="#000" d="M1 0l7 17"/></svg>
  <button class="tab cur">Ano1a5</button><svg class="slash" viewBox="0 0 9 17"><path fill="#fff" d="M0 0h8L1 17H0z"/><path fill="none" stroke="#000" d="M8 0L1 16M5 8l3 8"/></svg>
  <button class="tab">Ano6a10</button><svg class="slash" viewBox="0 0 9 17"><path fill="none" stroke="#000" d="M8 0L1 16M5 8l3 8"/></svg>
  <button class="tab">Ano11a15</button><svg class="slash" viewBox="0 0 9 17"><path fill="none" stroke="#000" d="M8 0L1 16M5 8l3 8"/></svg>
  <button class="tab">Ano16a20</button><svg class="slash" viewBox="0 0 9 17"><path fill="none" stroke="#000" d="M8 0L1 16M5 8l3 8"/></svg>
  <button class="tab">Ano21a25</button><svg class="slash" viewBox="0 0 9 17"><path fill="none" stroke="#000" d="M8 0L1 16M5 8l3 8"/></svg>
  <button class="tab">Resumo</button><svg class="slash" viewBox="0 0 9 17"><path fill="none" stroke="#000" d="M8 0L1 16"/></svg>
  <div class="hscroll"><i class="hsplit"></i><button class="sb left" aria-label="Rolar para a esquerda"></button><i class="hthumb"></i><i class="htrack"></i><button class="sb right" aria-label="Rolar para a direita"></button><i class="corner"></i></div>
</div>

<div class="toolbar drawbar">
  <i class="grip"></i>
  <button class="word">Desen<u>h</u>ar</button><button class="dd" aria-label="Menu desenhar"></button>
  <button class="tb" aria-label="Selecionar"><svg><use href="#cur"/></svg></button>
  <i class="sep"></i>
  <button class="word">Aut<u>o</u>Formas</button><button class="dd" aria-label="Menu AutoFormas"></button>
  <button class="tb" aria-label="Linha"><svg><use href="#line"/></svg></button><button class="tb" aria-label="Seta"><svg><use href="#arw"/></svg></button><button class="tb" aria-label="Retângulo"><svg><use href="#rect"/></svg></button><button class="tb" aria-label="Elipse"><svg><use href="#oval"/></svg></button><button class="tb" aria-label="Caixa de texto"><svg><use href="#tbox"/></svg></button><button class="tb" aria-label="WordArt"><svg><use href="#wart"/></svg></button><button class="tb" aria-label="Diagrama"><svg><use href="#diag"/></svg></button><button class="tb" aria-label="Clip-art"><svg><use href="#clip"/></svg></button><button class="tb" aria-label="Imagem"><svg><use href="#pic"/></svg></button>
  <i class="sep"></i>
  <button class="tb" aria-label="Preencher"><svg><use href="#fill"/></svg></button><button class="dd" aria-label="Cores"></button><button class="tb" aria-label="Cor da linha"><svg><use href="#lcol"/></svg></button><button class="dd" aria-label="Cores da linha"></button><button class="tb" aria-label="Cor do texto"><svg><use href="#fcol"/></svg></button><button class="dd" aria-label="Cores do texto"></button><button class="tb" aria-label="Espessura"><svg><use href="#lw"/></svg></button><button class="tb" aria-label="Tracejado"><svg><use href="#dash"/></svg></button><button class="tb" aria-label="Setas"><svg><use href="#arws"/></svg></button><button class="tb" aria-label="Sombra"><svg><use href="#shad"/></svg></button><button class="tb" aria-label="3D"><svg><use href="#cube"/></svg></button><button class="dd low" aria-label="Mais desenho"></button>
  <i class="grip mid"></i>
  <button class="tb" aria-label="Inserir imagem"><svg><use href="#pic"/></svg></button>
  <i class="sep"></i>
  <button class="tb" aria-label="Cor"><svg><use href="#grad"/></svg></button><button class="tb" aria-label="Mais contraste"><svg><use href="#con"/></svg></button><button class="tb" aria-label="Menos contraste"><svg><use href="#cod"/></svg></button><button class="tb" aria-label="Mais brilho"><svg><use href="#sun"/></svg></button><button class="tb" aria-label="Menos brilho"><svg><use href="#sud"/></svg></button>
  <i class="sep"></i>
  <button class="tb" aria-label="Cortar"><svg><use href="#crop"/></svg></button><button class="tb" aria-label="Girar"><svg><use href="#rot"/></svg></button><button class="tb" aria-label="Linhas"><svg><use href="#lw"/></svg></button><button class="tb" aria-label="Compactar"><svg><use href="#comp"/></svg></button><button class="tb" aria-label="Formatar imagem"><svg><use href="#gbk"/></svg></button><button class="tb" aria-label="Transparência"><svg><use href="#gar"/></svg></button>
  <i class="sep"></i>
  <button class="tb" aria-label="Redefinir"><svg><use href="#gst"/></svg></button><button class="dd low" aria-label="Mais imagem"></button>
</div>

<div class="status"><span>Pronto</span><span class="num">NÚM</span></div>

<footer class="taskbar">
  <button class="start"><svg><use href="#flag"/></svg>Iniciar</button>
  <i class="tgrip"></i>
  <div class="quick"><button aria-label="Internet"><svg><use href="#ie"/></svg></button><button aria-label="Word"><svg><use href="#wd"/></svg></button><button aria-label="Correio"><svg><use href="#oe"/></svg></button><button aria-label="Mídia"><svg><use href="#wmp"/></svg></button><button aria-label="Pesquisa"><svg><use href="#fsr"/></svg></button><button aria-label="Rede"><svg><use href="#net"/></svg></button><button aria-label="Gravador"><svg><use href="#red"/></svg></button><button aria-label="Contatos"><svg><use href="#ppl"/></svg></button><button aria-label="Conversa"><svg><use href="#chat"/></svg></button></div>
  <i class="tgrip"></i>
  <div class="tasks">
    <button class="task more"><svg><use href="#fold"/></svg><b>2</b>Windows Exp...</button>
    <button class="task more"><svg><use href="#wd"/></svg><b>3</b>Microsoft Word</button>
    <button class="task current"><svg><use href="#xl"/></svg>Microsoft Excel - ...</button>
  </div>
  <div class="tray"><svg><use href="#skype"/></svg><svg><use href="#mons"/></svg><svg><use href="#lock"/></svg><svg><use href="#sis"/></svg><svg><use href="#stop"/></svg><svg><use href="#scan"/></svg><svg><use href="#spk"/></svg><svg><use href="#inf"/></svg><svg><use href="#play"/></svg><svg><use href="#ava"/></svg><time>16:32</time></div>
</footer>

<form class="dialog" role="dialog" aria-labelledby="dt">
  <div class="dtitle"><h2 id="dt">Cálculo dos Momentos Fletores</h2><button type="button" class="cap close" aria-label="Fechar janela"><svg viewBox="0 0 16 16"><path stroke="#fff" stroke-width="2" d="M3 3l10 10M13 3L3 13"/></svg></button></div>
  <div class="dbody">
    <label for="f1">Arquivo de pesquisa</label><input id="f1" class="wide" value="3_Monta trem de carga.xls">
    <label for="f2">Quantidade de Tabuleiros</label><input id="f2" value="20000">
    <label for="f3" class="in">Faixas de tráfego</label><input id="f3" value="2">
    <label for="f4" class="in">Vão (m)</label><input id="f4" value="80">
    <button type="button" class="go"><span>Calcular</span></button>
  </div>
</form>
</body>
</html>
```
FILE: styles.css
```css
:root {
  --face: #ece9d8;
  --ui: "DejaVu Sans Condensed", "DejaVu Sans", sans-serif;
  --cell: "Liberation Sans", Arial, sans-serif;
}
* { box-sizing: border-box; }
body {
  margin: 0;
  height: 100vh;
  display: flex;
  flex-direction: column;
  overflow: hidden;
  background: var(--face);
  color: #000;
  font: 11px/14px var(--ui);
}
button, input, select { font: inherit; color: inherit; margin: 0; padding: 0; border: 0; border-radius: 0; background: none; min-width: 0; }
h1, h2 { margin: 0; font-weight: bold; white-space: nowrap; }
svg { width: 16px; height: 16px; flex: none; display: block; }
i { display: block; flex: none; }
.sprite { position: absolute; width: 0; height: 0; }

.titlebar {
  flex: none;
  height: 26px;
  display: flex;
  align-items: center;
  gap: 3px;
  padding: 0 2px;
  background: linear-gradient(#98b0e8, #7c98e0 20%, #7a94e0 50%, #86a6ee 85%, #7088d0);
}
.titlebar h1 { flex: 1; font: 600 13px/18px "Noto Sans", sans-serif; color: #dce4f8; }
.cap {
  width: 20px;
  height: 20px;
  display: grid;
  place-items: center;
  border: 1px solid #c4d2f6;
  border-radius: 3px;
  background: linear-gradient(135deg, #6c90f0, #3a62dc);
}
.titlebar .close { background: linear-gradient(135deg, #c88088, #a85c68); }

.menubar { flex: none; height: 24px; display: flex; align-items: center; }
.grip {
  width: 4px;
  height: 18px;
  margin: 0 0 0 2px;
  background: repeating-linear-gradient(#c4c1b0 0 1px, transparent 1px 2px);
}
.docicon { margin: 0 1px 0 2px; }
.menubar > button:not(.mdi) { padding: 0 7px 0 8px; height: 20px; white-space: nowrap; }
.combo { position: relative; display: block; height: 19px; background: #fff; flex: none; }
.combo::after {
  content: "";
  position: absolute;
  right: 1px;
  top: 1px;
  bottom: 1px;
  width: 11px;
  background: linear-gradient(#000, #000) 3px 8px / 5px 1px no-repeat, linear-gradient(#000, #000) 4px 9px / 3px 1px no-repeat, linear-gradient(#000, #000) 5px 10px / 1px 1px no-repeat, var(--face);
  pointer-events: none;
}
.combo select, .combo input { appearance: none; width: 100%; height: 19px; padding: 0 2px; outline: 0; display: block; }
.ask { width: 148px; margin: 0 2px 0 auto; }
.ask input::placeholder { color: #a09e94; opacity: 1; }
.mdi { width: 17px; height: 16px; }

.toolbar { flex: none; height: 26px; display: flex; align-items: center; background: #efede0; }
.toolbar.short { background: var(--face); }
.tb { width: 23px; height: 22px; display: grid; place-items: center; flex: none; }
.tb.on { border: 1px solid #316ac5; background: #dfe6f2; }
.txt { font: 14px/20px "DejaVu Serif", serif; color: #333; }
.txt b { font-weight: bold; font-size: 12px; }
.txt em { font-weight: bold; font-size: 13px; }
.sep { width: 3px; height: 20px; border-left: 1px solid #c5c2b2; margin-left: 3px; }
.dd { width: 11px; height: 22px; display: grid; place-items: center; flex: none; }
.dd::before { content: ""; width: 5px; height: 3px; background: #000; clip-path: polygon(0 0, 100% 0, 50% 100%); }
.dd.off::before { background: #b5b2a4; }
.dd.low { place-items: end center; padding-bottom: 4px; }
.zoom { width: 57px; margin: 0 1px 0 2px; }
.style { width: 89px; margin-left: 1px; }
.font { width: 127px; margin-left: 2px; }
.size { width: 40px; margin-left: 2px; }
.mid { margin-left: 6px; }

.formula { flex: none; height: 18px; display: flex; align-items: stretch; font: 13px/18px var(--cell); }
.formula input { background: #fff; outline: 0; }
.name { width: 92px; margin-left: 2px; text-align: center; }
.formula .dd { width: 19px; height: 18px; }
.formula .dd::before { width: 7px; height: 4px; }
.fx { width: 14px; height: 14px; margin: 2px 1px 0 41px; }
.fbar { flex: 1; padding: 0 5px; }

.work { flex: 1; min-height: 0; display: flex; border-top: 1px solid #6c6a5c; border-left: 2px solid #8c897a; border-right: 2px solid var(--face); background: #fff; }
.sheet { flex: 1; min-width: 0; position: relative; overflow: hidden; }
.grid { table-layout: fixed; width: max-content; border-collapse: separate; border-spacing: 0; font: 13px/16px var(--cell); }
.grid col { width: 64px; }
.grid col.h { width: 26px; }
.grid col.a { width: 74px; }
.grid col.b { width: 77px; }
.grid col.d { width: 71px; }
.grid th, .grid td { height: 17px; padding: 0; text-align: center; white-space: nowrap; border-right: 1px solid #b8b8b8; border-bottom: 1px solid #b8b8b8; font-weight: normal; }
.grid th { background: #edebdc; border-color: #aca899; }
.grid th.sel { background: #bccdee; border-color: #5c84c8; }
.grid .open { border-right-color: transparent; }
.grid .part { text-align: left; padding-left: 13px; }
.spill { display: block; margin: 0 -60px; position: relative; }
.active { outline: 2px solid #000; outline-offset: -1px; position: relative; }
.active::after { content: ""; position: absolute; right: -3px; bottom: -3px; width: 5px; height: 5px; background: #000; border-top: 1px solid #fff; border-left: 1px solid #fff; }

.macro { position: absolute; display: grid; place-items: center; width: 115px; height: 33px; border: 1px solid #000; overflow: hidden; }
.macro::before { content: ""; position: absolute; inset: 0; border: 4px solid; border-color: #fff #888 #aaa #fff; outline: 1px solid #000; outline-offset: -5px; z-index: 1; }
.stone { position: absolute; inset: 0; width: 100%; height: 100%; }
.macro span { position: relative; width: 80px; }
.calc { left: 499px; top: 22px; font: bold 10px/12px "DejaVu Sans", sans-serif; }
.clear { left: 500px; top: 63px; font: bold 14px/16px var(--cell); color: #f01010; }

.vscroll { width: 16px; display: flex; flex-direction: column; background: var(--face); }
.split { height: 6px; border-bottom: 1px solid #000; border-top: 1px solid #fff; }
.sb { width: 16px; height: 16px; border: 1px solid; border-color: #fff #7c7a6c #7c7a6c #fff; background: var(--face); display: grid; place-items: center; flex: none; }
.sb::before { content: ""; width: 7px; height: 4px; background: #000; clip-path: polygon(0 0, 100% 0, 50% 100%); }
.up::before { clip-path: polygon(50% 0, 100% 100%, 0 100%); }
.left::before, .right::before { width: 4px; height: 7px; clip-path: polygon(0 0, 100% 50%, 0 100%); }
.left::before { clip-path: polygon(100% 0, 100% 100%, 0 50%); }
.thumb { height: 9px; border: 1px solid; border-color: #fff #7c7a6c #7c7a6c #fff; }
.track { flex: 1; background: #f5f4ec; }

.tabs { flex: none; height: 17px; display: flex; border-top: 1px solid #777; border-bottom: 1px solid #f6f5ee; }
.tabnav { display: flex; width: 65px; }
.tabnav button { width: 16px; display: grid; place-items: center; }
.tabnav svg { width: 9px; height: 9px; }
.slash { width: 9px; height: 16px; }
.tab { padding: 0 6px 0 5px; font: 12px/15px var(--ui); white-space: nowrap; }
.tab.cur { background: #fff; padding: 0 3px 0 2px; font-weight: bold; }
.hscroll { width: 417px; margin-left: auto; display: flex; }
.hsplit { width: 3px; border-right: 1px solid #000; border-left: 1px solid #aaa; }
.hthumb { flex: 1; border: 1px solid; border-color: #fff #7c7a6c #fff #aaa; margin-left: 1px; }
.htrack { width: 26px; background: #f5f4ec; }
.corner { width: 22px; border-left: 2px solid #000; margin-left: 3px; background: #dedbc9; }

.drawbar { height: 28px; border-bottom: 1px solid #fff; }
.word { padding: 0 0 0 3px; white-space: nowrap; }
.status { flex: none; height: 18px; display: flex; align-items: center; justify-content: space-between; padding: 0 81px 0 4px; }

.taskbar { flex: none; height: 34px; display: flex; background: linear-gradient(#1c50b8, #3c80f0 8%, #2860dc 20%, #2460dc 85%, #1a48b0); color: #fff; padding-top: 3px; }
.start { width: 110px; display: flex; align-items: center; gap: 6px; padding-left: 10px; border-radius: 0 12px 12px 0; background: linear-gradient(#5cac5c, #3c983c 20%, #348c34 80%, #247024); font: italic bold 17px/24px var(--cell); color: #fff; text-shadow: 1px 1px 2px #143c14; box-shadow: inset -3px 0 4px #1f6a1f; }
.start svg { width: 18px; height: 18px; }
.tgrip { width: 4px; height: 20px; margin: 6px 0 0 10px; background: repeating-linear-gradient(#1844a8 0 2px, transparent 2px 4px); }
.quick { display: flex; align-items: center; margin: 0 10px 0 4px; }
.quick button { width: 23px; display: grid; place-items: center; }
.quick + .tgrip { margin-left: 5px; }
.tasks { flex: 1; display: flex; gap: 1px; padding: 3px 0 1px 5px; }
.task { flex: 0 1 138px; display: flex; align-items: center; gap: 4px; padding: 0 8px; border-radius: 3px; background: linear-gradient(#5c98f8, #3c80f0 20%, #3878e8); white-space: nowrap; box-shadow: inset -1px -1px 1px #2458c0; }
.task b { color: #c8cce0; }
.more::after { content: ""; width: 5px; height: 3px; background: #fff; clip-path: polygon(0 0, 100% 0, 50% 100%); margin: 0 -4px 0 auto; }
.task.current { background: #1c4cb4; box-shadow: inset 1px 1px 2px #103080; }
.tray { width: 237px; display: flex; align-items: center; gap: 2px; padding-left: 11px; border-left: 1px solid #0c3c98; background: linear-gradient(#28b0f8, #1890e8 15%, #1490ec 85%, #1070c0); box-shadow: inset 2px 0 1px #40b8f8; }
.tray time { margin: 0 13px 0 auto; }

.dialog { position: absolute; left: 342px; top: 244px; width: 340px; border: 3px solid #0838c0; border-top: 0; border-radius: 7px 7px 0 0; background: var(--face); overflow: hidden; }
.dtitle { height: 28px; display: flex; align-items: center; justify-content: space-between; margin: 0 -3px; padding: 2px 5px 0 6px; background: linear-gradient(#0850d0, #3890ff 8%, #0458e4 25%, #0560f4 75%, #0660f8 88%, #0444c0); color: #fff; }
.dtitle h2 { font: bold 12px/16px "Noto Sans", sans-serif; text-shadow: 1px 1px #10308c; }
.dtitle .cap { width: 21px; height: 21px; background: linear-gradient(135deg, #f08868, #d84420 60%, #c03010); border-color: #fff; }
.dbody { display: grid; grid-template-columns: 155px 1fr; column-gap: 13px; row-gap: 8px; padding: 16px 30px 23px 0; }
.dbody label { text-align: right; white-space: nowrap; padding: 9px 1px 0 0; }
.dbody label.in { padding-right: 6px; }
.dbody input { width: 72px; height: 24px; padding: 0 0 1px 10px; background: #fff; border: 1px solid; border-color: #807d70 #fff #fff #807d70; outline: 0; box-shadow: inset 1px 1px #444; }
.dbody .wide { width: 136px; margin-bottom: 8px; }
.go { grid-column: 1 / -1; width: 152px; height: 32px; margin: 8px 0 0 96px; padding: 2px; border: 1px solid #000; box-shadow: inset 1px 1px #fff, inset -2px -2px #9c998a; }
.go span { display: grid; place-items: center; height: 100%; border: 1px dotted #000; }
```
